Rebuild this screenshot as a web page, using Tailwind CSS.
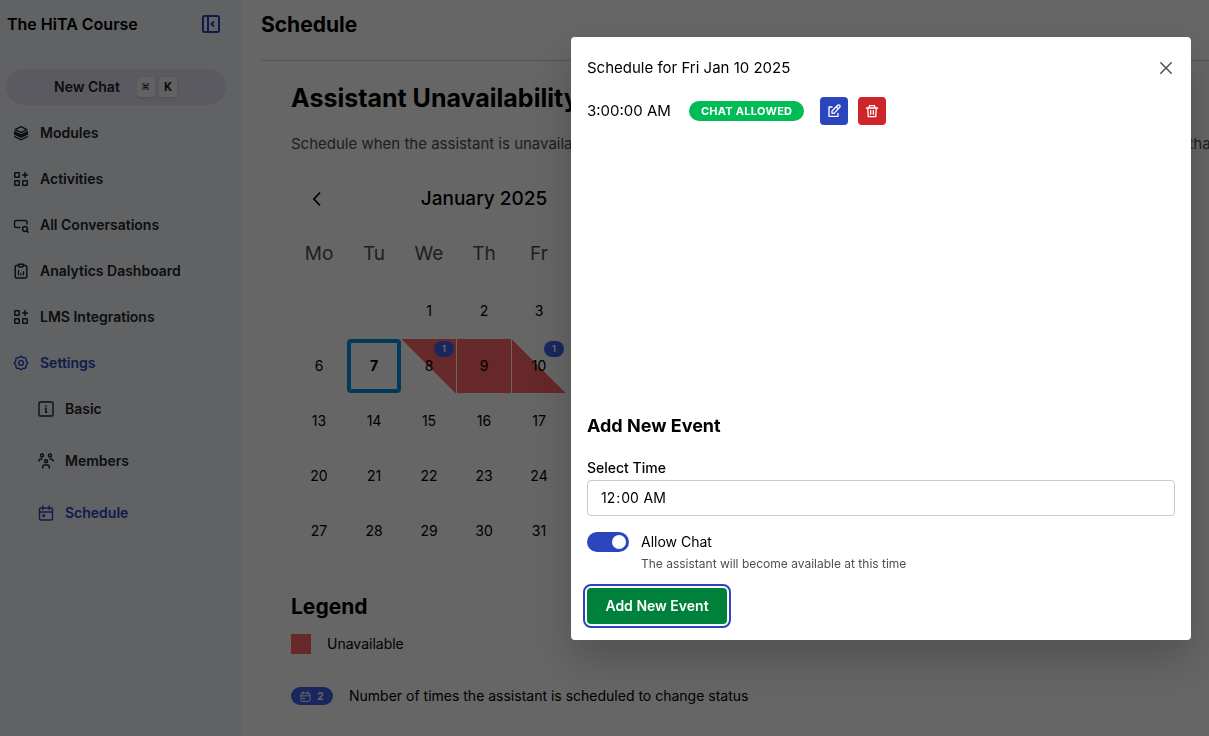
<!DOCTYPE html>
<html lang="en">
<head>
    <meta charset="UTF-8">
    <meta name="viewport" content="width=device-width, initial-scale=1.0">
    <title>The HiTA Course - Schedule</title>
    <script src="https://cdn.jsdelivr.net/npm/@tailwindcss/browser@4"></script>
</head>
<body class="font-['Inter','Liberation_Sans',sans-serif] text-black text-sm bg-white overflow-hidden">
    <!-- shared icons -->
    <svg class="hidden">
        <symbol id="icon-grid" viewBox="0 0 16 16" fill="none" stroke="currentColor" stroke-width="1.5" stroke-linejoin="round">
            <rect x="1.75" y="1.75" width="4.5" height="4.5" rx=".5"/>
            <rect x="1.75" y="9.75" width="4.5" height="4.5" rx=".5"/>
            <rect x="9.75" y="9.75" width="4.5" height="4.5" rx=".5"/>
            <path d="M12 1v6M9 4h6"/>
        </symbol>
        <symbol id="icon-calendar" viewBox="0 0 16 16" fill="none" stroke="currentColor" stroke-width="1.4" stroke-linejoin="round" stroke-linecap="round">
            <rect x="1.5" y="3" width="13" height="12" rx="1.5"/>
            <path d="M1.5 7h13M4.8 1v3.5M11.2 1v3.5"/>
            <path d="M5 10h1.4v1.4H5z" fill="currentColor"/>
        </symbol>
    </svg>

    <div class="flex h-screen">
        <aside class="w-[241px] shrink-0 bg-[#f1f5f9] text-[#212529]">
            <div class="flex items-center justify-between h-12 pl-[7px] pr-5">
                <h2 class="text-base font-semibold text-black">The HiTA Course</h2>
                <button type="button" aria-label="Collapse sidebar" class="text-[#2b45bc]">
                    <svg class="size-5" viewBox="0 0 20 20" fill="none" stroke="currentColor" stroke-width="2">
                        <rect x="2" y="2" width="16" height="16" rx="1.5"/>
                        <path d="M7 2v16M13 7.500l-2.500 2.500 2.500 2.500"/>
                    </svg>
                </button>
            </div>

            <div class="pl-[6px] pr-[15px] pt-[21px]">
                <button type="button" class="flex items-center w-full h-9 pl-12 rounded-full bg-[#e0e2f0] font-semibold">
                    New Chat
                    <kbd class="ml-[17px] flex items-center justify-center w-[18px] h-5 rounded-sm bg-[#f4f4f5] shadow-sm font-sans text-[9px] font-normal">⌘</kbd>
                    <kbd class="ml-1 flex items-center justify-center w-[18px] h-5 rounded-sm bg-[#f4f4f5] shadow-sm font-['Roboto',sans-serif] text-xs font-bold">K</kbd>
                </button>
            </div>

            <nav class="pt-[5px] font-semibold">
                <a href="#" class="flex items-center gap-3 h-[46px] pl-[13px]">
                    <svg class="size-4 -mr-px" viewBox="0 0 16 16" fill="currentColor">
                        <path d="M8 1.700 13.800 4.700 8 7.700 2.200 4.700z" fill="none" stroke="currentColor" stroke-width="1.5" stroke-linejoin="round"/>
                        <path d="M1 5.800 8 9.200l7-3.400v3.600l-7 3.500-7-3.500z"/>
                        <path d="M1 10.600l7 3.500 7-3.500v1.400L8 15.500l-7-3.500z"/>
                    </svg>
                    Modules
                </a>
                <a href="#" class="flex items-center gap-3 h-[46px] pl-[13px]">
                    <svg class="size-4 -mr-px"><use href="#icon-grid"/></svg>
                    Activities
                </a>
                <a href="#" class="flex items-center gap-3 h-[46px] pl-[13px]">
                    <svg class="size-4 -mr-px" viewBox="0 0 16 16" fill="none" stroke="currentColor" stroke-width="1.5" stroke-linecap="round">
                        <path d="M7 10.500H3A1.500 1.500 0 0 1 1.500 9V5A1.500 1.500 0 0 1 3 3.500h9.500A1.500 1.500 0 0 1 14 5v2"/>
                        <circle cx="12" cy="12" r="2.4"/>
                        <path d="M13.800 13.800l1.400 1.400"/>
                    </svg>
                    All Conversations
                </a>
                <a href="#" class="flex items-center gap-3 h-[46px] pl-[13px]">
                    <svg class="size-4 -mr-px" viewBox="0 0 16 16" fill="none" stroke="currentColor" stroke-width="1.5" stroke-linecap="round" stroke-linejoin="round">
                        <path d="M5.500 2.500H3.700A1.500 1.500 0 0 0 2.200 4v9.500A1.500 1.500 0 0 0 3.700 15h8.600a1.500 1.500 0 0 0 1.500-1.500V4a1.500 1.500 0 0 0-1.500-1.500h-1.800"/>
                        <path d="M5.500 1.200h5v1.500L9.300 4H6.700L5.500 2.700z"/>
                        <path d="M5.500 7.500v4.300M8 10.300v1.500M10.500 9v2.800" stroke-width="1.3"/>
                    </svg>
                    Analytics Dashboard
                </a>
                <a href="#" class="flex items-center gap-3 h-[46px] pl-[13px]">
                    <svg class="size-4 -mr-px"><use href="#icon-grid"/></svg>
                    LMS Integrations
                </a>
                <a href="#" class="flex items-center gap-3 h-[46px] pl-[13px] text-[#2b45bc]">
                    <svg class="size-4 -mr-px" viewBox="0 0 16 16" fill="none" stroke="currentColor" stroke-width="1.4" stroke-linejoin="round">
                        <path d="M6.600 2.400Q8 .2 9.400 2.400q.8.300 1.600.5 2.500-.6 2 2 .3.700.6 1.700 2.200 1.400 0 2.800-.3.800-.6 1.700.5 2.500-2 2-.8.200-1.600.5Q8 15.800 6.600 13.600q-.8-.3-1.600-.5-2.500.5-2-2-.3-.9-.6-1.700-2.200-1.400 0-2.800.3-1 .6-1.700-.5-2.600 2-2 .8-.200 1.600-.5z"/>
                        <circle cx="8" cy="8" r="2.4"/>
                    </svg>
                    Settings
                </a>
                <a href="#" class="flex items-center gap-3 h-[46px] pl-[38px]">
                    <svg class="size-4 -mr-px" viewBox="0 0 16 16" fill="none" stroke="currentColor" stroke-width="1.4">
                        <rect x="1" y="1" width="14" height="14" rx="1.2"/>
                        <path d="M8 4.600v1.300M6.800 7.400H8v3.800M7 11.200h2.300"/>
                    </svg>
                    Basic
                </a>
                <a href="#" class="flex items-center gap-3 h-[46px] mt-[6px] pl-[38px]">
                    <svg class="size-4 -mr-px" viewBox="0 0 16 16" fill="none" stroke="currentColor" stroke-width="1.5">
                        <circle cx="4" cy="2.5" r="1.5"/>
                        <circle cx="12" cy="2.5" r="1.5"/>
                        <circle cx="8" cy="8.3" r="1.5"/>
                        <path d="M1 8.500V8a2 2 0 0 1 2-2h1.500M15 8.500V8a2 2 0 0 0-2-2h-1.500M4.700 15.500V14a2 2 0 0 1 2-2h2.600a2 2 0 0 1 2 2v1.500"/>
                    </svg>
                    Members
                </a>
                <a href="#" class="flex items-center gap-3 h-[46px] mt-[6px] pl-[38px] text-[#2b45bc]">
                    <svg class="size-4 -mr-px"><use href="#icon-calendar"/></svg>
                    Schedule
                </a>
            </nav>
        </aside>

        <main class="flex-1 min-w-0 pl-5">
            <header class="h-[61px] pt-2 border-b border-[#ced4da]">
                <h1 class="text-[21px] leading-[34px] font-bold">Schedule</h1>
            </header>

            <div class="pl-[30px] pt-5 whitespace-nowrap overflow-hidden">
                <h2 class="text-[25px] leading-[34px] font-bold">Assistant Unavailability</h2>
                <p class="mt-4 text-[15px] leading-[26px] text-[#495057]">Schedule when the assistant is unavailable to students in the course. Students will not be able to begin any new chats at times that you set.</p>

                <div class="w-[386px] pt-[22px]">
                    <div class="flex items-center justify-between h-10 px-4">
                        <button type="button" aria-label="Previous month">
                            <svg class="size-5" viewBox="0 0 20 20" fill="none" stroke="currentColor" stroke-width="1.8"><path d="M13 3.500 7 10l6 6.500"/></svg>
                        </button>
                        <span class="text-[19px] leading-7 font-medium">January 2025</span>
                        <button type="button" aria-label="Next month">
                            <svg class="size-5" viewBox="0 0 20 20" fill="none" stroke="currentColor" stroke-width="1.8"><path d="M7 3.500l6 6.500-6 6.500"/></svg>
                        </button>
                    </div>

                    <table class="w-full table-fixed border-separate border-spacing-px text-center">
                        <thead>
                            <tr class="h-[63px] text-[19px] leading-7 text-[#495057] align-top">
                                <th class="pt-5 font-normal">Mo</th>
                                <th class="pt-5 font-normal">Tu</th>
                                <th class="pt-5 font-normal">We</th>
                                <th class="pt-5 font-normal">Th</th>
                                <th class="pt-5 font-normal">Fr</th>
                                <th class="pt-5 font-normal">Sa</th>
                                <th class="pt-5 font-normal">Su</th>
                            </tr>
                        </thead>
                        <tbody>
                            <tr class="h-[54px]"><td></td><td></td><td>1</td><td>2</td><td>3</td><td>4</td><td>5</td></tr>
                            <tr class="h-[54px]">
                                <td>6</td>
                                <td class="rounded-sm border-2 border-[#0090e0] outline-2 -outline-offset-4 outline-[#0090e0] font-bold">7</td>
                                <td class="relative bg-[linear-gradient(to_top_right,transparent_50%,#ff6467_50%)]">8
                                    <span class="absolute top-[2px] right-[2px] flex items-center justify-center w-5 h-4 rounded-full bg-[#4263eb] text-white text-[9px] font-bold">1</span>
                                </td>
                                <td class="bg-[#ff6467]">9</td>
                                <td class="relative bg-[linear-gradient(to_top_right,#ff6467_50%,transparent_50%)]">10
                                    <span class="absolute top-[2px] right-[2px] flex items-center justify-center w-5 h-4 rounded-full bg-[#4263eb] text-white text-[9px] font-bold">1</span>
                                </td>
                                <td>11</td><td>12</td>
                            </tr>
                            <tr class="h-[54px]"><td>13</td><td>14</td><td>15</td><td>16</td><td>17</td><td>18</td><td>19</td></tr>
                            <tr class="h-[54px]"><td>20</td><td>21</td><td>22</td><td>23</td><td>24</td><td>25</td><td>26</td></tr>
                            <tr class="h-[54px]"><td>27</td><td>28</td><td>29</td><td>30</td><td>31</td><td></td><td></td></tr>
                        </tbody>
                    </table>
                </div>

                <h3 class="mt-8 text-[21px] leading-8 font-bold">Legend</h3>
                <div class="flex items-center gap-4 mt-[11px]">
                    <span class="size-5 bg-[#ff6467]"></span>
                    Unavailable
                </div>
                <div class="flex items-center gap-4 mt-8">
                    <span class="flex items-center justify-center gap-[6px] w-[42px] h-[18px] rounded-full bg-[#4263eb] text-white text-[10px] font-bold">
                        <svg class="size-[11px]"><use href="#icon-calendar"/></svg>
                        2
                    </span>
                    Number of times the assistant is scheduled to change status
                </div>
            </div>
        </main>
    </div>

    <div class="fixed inset-0 bg-black/60"></div>

    <section role="dialog" aria-modal="true" aria-labelledby="modalTitle" class="absolute top-[37px] right-[18px] w-[620px] p-4 rounded-sm bg-white shadow-[0_20px_40px_rgba(0,0,0,0.2)]">
        <header class="flex items-center justify-between h-[30px] mb-[14px]">
            <h2 id="modalTitle" class="text-[15px]">Schedule for Fri Jan 10 2025</h2>
            <button type="button" aria-label="Close" class="pr-[3px] text-[#495057]">
                <svg class="size-3" viewBox="0 0 12 12" fill="none" stroke="currentColor" stroke-width="1.5" stroke-linecap="round"><path d="M.8.8l10.400 10.400M11.200.8.8 11.200"/></svg>
            </button>
        </header>

        <div class="h-[315px]">
            <div class="flex items-center">
                <span class="text-[15px]">3:00:00 AM</span>
                <span class="ml-[18px] px-3 h-5 leading-5 rounded-full bg-[#00bc56] text-white text-[11px] font-bold tracking-wide uppercase">Chat allowed</span>
                <button type="button" aria-label="Edit" class="ml-4 flex items-center justify-center size-7 rounded-sm bg-[#2b45bc] text-white">
                    <svg class="size-4" viewBox="0 0 24 24" fill="none" stroke="currentColor" stroke-width="2" stroke-linecap="round" stroke-linejoin="round">
                        <path d="M9 6H4.500v14H18v-4.500"/>
                        <path d="M9 15.500V12l8.500-8.500a2.100 2.100 0 0 1 3 3L12 15.500zM15.500 5.500l3 3"/>
                    </svg>
                </button>
                <button type="button" aria-label="Delete" class="ml-[10px] flex items-center justify-center size-7 rounded-sm bg-[#d0242b] text-white">
                    <svg class="size-4" viewBox="0 0 24 24" fill="none" stroke="currentColor" stroke-width="2" stroke-linecap="round" stroke-linejoin="round">
                        <path d="M3.500 7.500h17M8 7.500V4h8v3.500M5.500 7.500l1 13h11l1-13M10 11v6M14 11v6"/>
                    </svg>
                </button>
            </div>
        </div>

        <form>
            <h3 class="text-lg font-bold">Add New Event</h3>
            <label for="eventTime" class="block mt-[17px] leading-[22px] mb-px font-medium">Select Time</label>
            <input id="eventTime" type="time" value="00:00" class="block w-full h-9 px-3 rounded-sm border border-[#c3cad3] bg-white [&::-webkit-calendar-picker-indicator]:hidden">

            <div class="flex items-start mt-4">
                <input id="allowChat" type="checkbox" role="switch" checked class="appearance-none w-[42px] h-5 rounded-full bg-[#2b45bc] before:block before:size-[14px] before:mt-[3px] before:ml-[25px] before:rounded-full before:bg-white">
                <div class="ml-3">
                    <label for="allowChat" class="block leading-5">Allow Chat</label>
                    <p class="mt-1 text-xs text-[#495057]">The assistant will become available at this time</p>
                </div>
            </div>

            <button type="submit" class="block mt-4 w-[140px] h-9 rounded-sm bg-[#00813b] text-white font-semibold outline-2 outline-offset-2 outline-[#2b45bc]">Add New Event</button>
        </form>
    </section>
</body>
</html>
